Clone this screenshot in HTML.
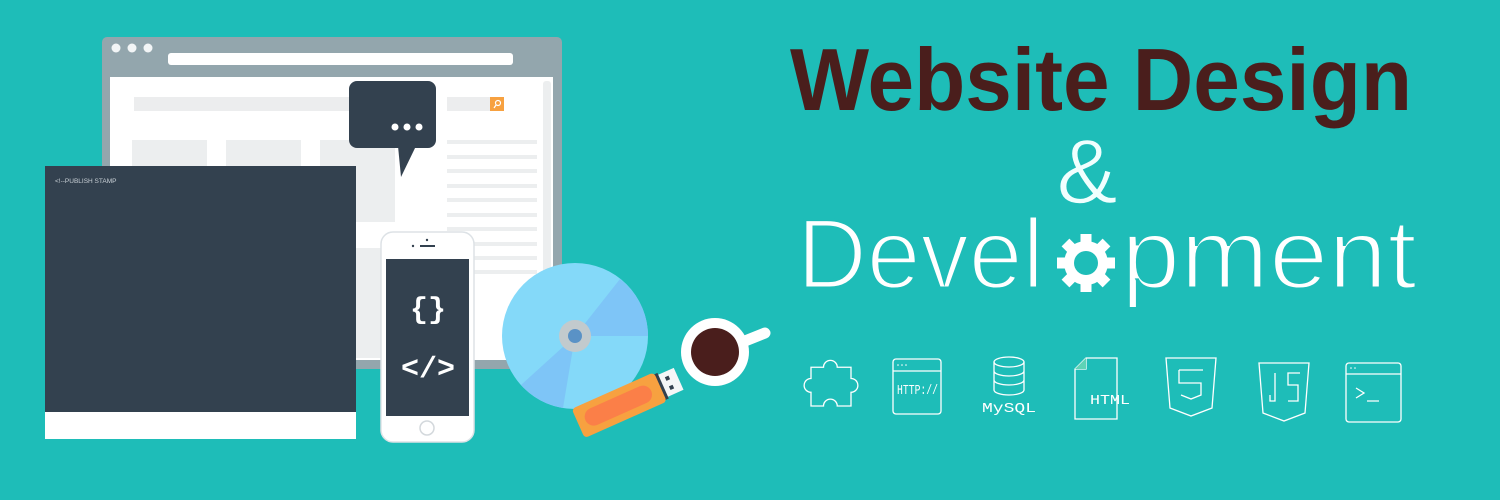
<!DOCTYPE html>
<html><head><meta charset="utf-8"><style>
html,body{margin:0;padding:0;background:#1ebdb8;}
svg{display:block}
</style></head><body>
<svg width="1500" height="500" viewBox="0 0 1500 500" xmlns="http://www.w3.org/2000/svg">
<rect width="1500" height="500" fill="#1ebdb8"/>
<!-- browser -->
<rect x="102" y="37" width="460" height="332" rx="5" fill="#93a6ad"/>
<rect x="110" y="77" width="443" height="283" fill="#ffffff"/>
<circle cx="116" cy="48" r="4.5" fill="#f2f5f6"/><circle cx="132" cy="48" r="4.5" fill="#f2f5f6"/><circle cx="148" cy="48" r="4.5" fill="#f2f5f6"/>
<rect x="168" y="53" width="345" height="12" rx="3" fill="#ffffff"/>
<rect x="543" y="81" width="8" height="270" rx="3" fill="#eceeef"/>
<rect x="134" y="97" width="220" height="14" fill="#ecedee"/>
<rect x="447" y="97" width="44" height="14" fill="#ecedee"/>
<rect x="490" y="97" width="14" height="14" fill="#f7a140"/>
<circle cx="498" cy="103" r="2.5" fill="none" stroke="#fff" stroke-width="1.2"/><line x1="496" y1="105" x2="494" y2="108" stroke="#fff" stroke-width="1.2"/>
<g fill="#eceeef">
<rect x="132" y="140" width="75" height="30"/><rect x="226" y="140" width="75" height="30"/><rect x="320" y="140" width="75" height="82"/>
<rect x="447" y="140" width="90" height="4"/><rect x="447" y="155" width="90" height="4"/><rect x="447" y="169" width="90" height="4"/><rect x="447" y="184" width="90" height="4"/><rect x="447" y="198" width="90" height="4"/><rect x="447" y="213" width="90" height="4"/><rect x="447" y="227" width="90" height="4"/><rect x="447" y="242" width="90" height="4"/><rect x="447" y="256" width="90" height="4"/><rect x="447" y="270" width="90" height="4"/>
<rect x="356" y="248" width="30" height="110"/>
</g>
<!-- bubble -->
<rect x="349" y="81" width="87" height="67" rx="8" fill="#33414f"/>
<polygon points="398,146 416,146 401,177" fill="#33414f"/>
<circle cx="395" cy="127" r="3.5" fill="#fff"/><circle cx="407" cy="127" r="3.5" fill="#fff"/><circle cx="419" cy="127" r="3.5" fill="#fff"/>
<!-- dark panel -->
<rect x="45" y="166" width="311" height="247" fill="#33414f"/>
<rect x="45" y="412" width="311" height="27" fill="#ffffff"/>
<text x="55" y="183" font-family="Liberation Sans, sans-serif" font-size="6.5" fill="#c9d0d6">&lt;!--PUBLISH STAMP</text>
<!-- phone -->
<rect x="381" y="232" width="93" height="210" rx="12" fill="#ffffff" stroke="#dde2e6" stroke-width="1.5"/>
<rect x="386" y="259" width="83" height="157" fill="#33414f"/>
<circle cx="427" cy="428" r="7" fill="#fff" stroke="#d3d8dc" stroke-width="1.5"/>
<circle cx="427" cy="240" r="1.2" fill="#33414f"/><circle cx="413" cy="246" r="1.2" fill="#33414f"/><rect x="420" y="245" width="15" height="2" fill="#33414f"/>
<text x="428" y="318" text-anchor="middle" font-family="Liberation Mono, monospace" font-weight="bold" font-size="30" fill="#fff">{}</text>
<text x="428" y="377" text-anchor="middle" font-family="Liberation Mono, monospace" font-weight="bold" font-size="30" fill="#fff">&lt;/&gt;</text>
<!-- CD -->
<circle cx="575" cy="336" r="73" fill="#84d9f9"/>
<path d="M575 336 L620 279 A73 73 0 0 1 648 336 Z" fill="#7ec5f7"/>
<path d="M575 336 L563 408 A73 73 0 0 1 521 385 Z" fill="#7ec5f7"/>
<circle cx="575" cy="336" r="16" fill="#c2cacd"/>
<circle cx="575" cy="336" r="7" fill="#5a92c6"/>
<!-- cup -->
<line x1="735" y1="345" x2="765" y2="333" stroke="#fff" stroke-width="11" stroke-linecap="round"/>
<circle cx="715" cy="352" r="34" fill="#fff"/>
<circle cx="715" cy="352" r="24" fill="#4a1e1c"/>
<!-- usb -->
<g transform="translate(622,404) rotate(-24)">
<rect x="44" y="-12" width="18" height="24" fill="#f4f6f7"/>
<rect x="50" y="-7" width="4" height="4" fill="#33414f"/><rect x="50" y="3" width="4" height="4" fill="#33414f"/>
<rect x="40" y="-14" width="5" height="28" fill="#33414f"/>
<rect x="-48" y="-16" width="90" height="32" rx="4" fill="#f7a140"/>
<rect x="-40" y="-9" width="72" height="18" rx="9" fill="#fb7f48"/>
</g>
<!-- title -->
<text x="790" y="110" textLength="622" lengthAdjust="spacingAndGlyphs" font-family="Liberation Sans Narrow, Liberation Sans, sans-serif" font-weight="bold" font-size="88" fill="#4a1e1c">Website Design</text>
<text x="1087" y="203" text-anchor="middle" font-family="Liberation Sans, sans-serif" font-size="92" fill="#f0fffe" stroke="#1ebdb8" stroke-width="1.5">&amp;</text>
<text x="797" y="288" textLength="247" lengthAdjust="spacingAndGlyphs" font-family="Liberation Sans, sans-serif" font-size="99" fill="#fff" stroke="#1ebdb8" stroke-width="3">Devel</text>
<text x="1121" y="288" textLength="296" lengthAdjust="spacingAndGlyphs" font-family="Liberation Sans, sans-serif" font-size="99" fill="#fff" stroke="#1ebdb8" stroke-width="3">pment</text>
<!-- gear -->
<g transform="translate(1086,263)" fill="#fff">
<circle r="22"/>
<g><rect x="-5.5" y="-29" width="11" height="58"/><rect x="-5.5" y="-29" width="11" height="58" transform="rotate(45)"/><rect x="-5.5" y="-29" width="11" height="58" transform="rotate(90)"/><rect x="-5.5" y="-29" width="11" height="58" transform="rotate(135)"/></g>
<circle r="12" fill="#1ebdb8"/>
</g>
<!-- icons -->
<g fill="none" stroke="#fff" stroke-width="1.3">
<path transform="translate(831,386) scale(1.25) translate(-829,-386)" d="M813 371 h10 a5.5 5.5 0 1 1 11 0 h11 v9 a5.5 5.5 0 1 1 0 11 v11 h-11 a5.5 5.5 0 1 0 -11 0 h-10 v-11 a5.5 5.5 0 1 1 0 -11 z" stroke-width="1.05"/>
<rect x="893" y="359" width="48" height="55" rx="3"/><line x1="893" y1="371" x2="941" y2="371"/>
<ellipse cx="1009" cy="362" rx="15" ry="5"/><path d="M994 362 v28 a15 5 0 0 0 30 0 v-28 M994 371 a15 5 0 0 0 30 0 M994 380 a15 5 0 0 0 30 0"/>
<path d="M1086 358 h31 v61 h-42 v-50 z M1075 369 h11 v-11"/>
<path d="M1166 358 h50 l-4 50 l-21 8 l-21 -8 z"/>
<path d="M1179 370 h24 M1179 370 v13 h22 v12 l-10 4 l-10 -4"/>
<path d="M1259 363 h50 l-4 50 l-21 8 l-21 -8 z"/>
<path d="M1275 373 v28 h-5 v-6 M1300 373 h-12 v12 h10 v16 h-10"/>
<rect x="1346" y="363" width="55" height="59" rx="3"/><line x1="1346" y1="374" x2="1401" y2="374"/>
<path d="M1356 388 l8 5 l-8 5 M1367 401 h12"/>
</g>
<path d="M1075 369 h11 v-11 z" fill="#5fd3b6"/>
<g fill="#fff" font-family="Liberation Mono, monospace" font-size="14">
<text x="897" y="394" textLength="41" lengthAdjust="spacingAndGlyphs">HTTP://</text>
<text x="982" y="412" textLength="54" lengthAdjust="spacingAndGlyphs">MySQL</text>
<text x="1090" y="404" textLength="40" lengthAdjust="spacingAndGlyphs">HTML</text>
</g>
<g fill="#fff"><circle cx="898" cy="365" r="0.8"/><circle cx="902" cy="365" r="0.8"/><circle cx="906" cy="365" r="0.8"/><circle cx="1351" cy="368" r="0.8"/><circle cx="1355" cy="368" r="0.8"/></g>
</svg>
</body></html>
